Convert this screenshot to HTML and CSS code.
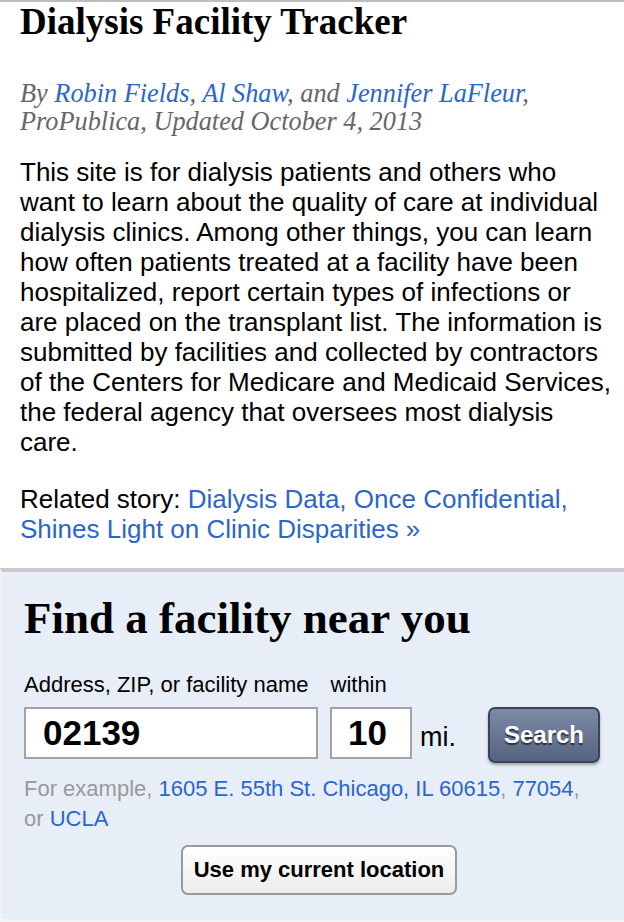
FILE: index.html
```html
<!DOCTYPE html>
<html>
<head>
<meta charset="utf-8">
<link rel="stylesheet" href="styles.css">
</head>
<body>
<div class="page">
  <header class="intro">
    <h1 class="title">Dialysis Facility Tracker</h1>
    <p class="byline">By <a href="#">Robin Fields</a>, <a href="#">Al Shaw</a>, and <a href="#">Jennifer LaFleur</a>,<br>ProPublica, Updated October 4, 2013</p>
    <p class="desc">This site is for dialysis patients and others who<br>want to learn about the quality of care at individual<br>dialysis clinics. Among other things, you can learn<br>how often patients treated at a facility have been<br>hospitalized, report certain types of infections or<br>are placed on the transplant list. The information is<br>submitted by facilities and collected by contractors<br>of the Centers for Medicare and Medicaid Services,<br>the federal agency that oversees most dialysis<br>care.</p>
    <p class="related">Related story: <a href="#">Dialysis Data, Once Confidential,<br>Shines Light on Clinic Disparities »</a></p>
  </header>
  <section class="finder">
    <h2 class="finder-title">Find a facility near you</h2>
    <div class="labels">
      <span class="label-addr">Address, ZIP, or facility name</span>
      <span class="label-within">within</span>
    </div>
    <div class="fields">
      <div class="input addr">02139</div>
      <div class="input dist">10</div>
      <span class="unit">mi.</span>
      <button class="search-btn">Search</button>
    </div>
    <p class="examples">For example, <a href="#">1605 E. 55th St. Chicago, IL 60615</a>, <a href="#">77054</a>,<br>or <a href="#">UCLA</a></p>
    <div class="locate-row">
      <button class="locate-btn">Use my current location</button>
    </div>
  </section>
</div>
</body>
</html>
```
FILE: styles.css
```css
html, body {
  margin: 0;
  padding: 0;
  background: #ffffff;
}
.page {
  width: 624px;
  border-top: 2px solid #bdbdbd;
}
a {
  color: #2a66cc;
  text-decoration: none;
}
.intro {
  padding: 0 4px 0 20px;
}
.title {
  margin: 0;
  font-family: "Liberation Serif", "Times New Roman", serif;
  font-weight: bold;
  font-size: 37px;
  line-height: 40px;
  color: #000;
}
.byline {
  margin: 38px 0 0 0;
  font-family: "Liberation Serif", "Times New Roman", serif;
  font-style: italic;
  font-size: 26.3px;
  line-height: 28px;
  color: #666;
  white-space: nowrap;
}
.desc {
  margin: 21px 0 0 0;
  font-family: "Liberation Sans", Arial, sans-serif;
  font-size: 26px;
  line-height: 30px;
  color: #000;
  white-space: nowrap;
}
.related {
  margin: 27px 0 0 0;
  font-family: "Liberation Sans", Arial, sans-serif;
  font-size: 26px;
  line-height: 30px;
  color: #000;
  white-space: nowrap;
}
.finder {
  margin-top: 24px;
  border-top: 4px solid #c9c9c9;
  border-left: 2px solid #f1f1f1;
  border-bottom: 3px solid #f4f4f4;
  background: #e7eef7;
  padding: 22px 22px 24px 22px;
  font-family: "Liberation Sans", Arial, sans-serif;
}
.finder-title {
  margin: 0;
  font-family: "Liberation Serif", "Times New Roman", serif;
  font-weight: bold;
  font-size: 45px;
  line-height: 48px;
  color: #000;
}
.labels {
  margin-top: 31px;
  display: flex;
  font-size: 22px;
  line-height: 24px;
  color: #000;
}
.label-within {
  margin-left: 22px;
}
.fields {
  margin-top: 10px;
  display: flex;
  align-items: flex-start;
}
.input {
  box-sizing: border-box;
  height: 52px;
  background: #fff;
  border: 2px solid #a3a3a3;
  font-weight: bold;
  font-size: 35px;
  line-height: 48px;
  color: #000;
}
.addr {
  width: 294px;
  padding-left: 17px;
}
.dist {
  width: 82px;
  margin-left: 12px;
  padding-left: 16px;
}
.unit {
  margin-left: 8px;
  font-size: 27px;
  line-height: 52px;
  padding-top: 4px;
  color: #000;
}
.search-btn {
  margin-left: 32px;
  width: 112px;
  height: 56px;
  box-sizing: border-box;
  border: 2px solid #38445e;
  border-radius: 7px;
  background: linear-gradient(#7d8aa6, #56647f);
  box-shadow: 0 2px 3px rgba(0,0,0,0.3);
  color: #fff;
  font-family: "Liberation Sans", Arial, sans-serif;
  font-weight: bold;
  font-size: 24px;
  text-shadow: 0 2px 1px #2a3247;
  padding: 0;
}
.examples {
  margin: 11px 0 0 0;
  font-size: 22px;
  line-height: 30px;
  color: #999;
  white-space: nowrap;
}
.locate-row {
  margin-top: 11px;
  display: flex;
  padding-left: 157px;
}
.locate-btn {
  box-sizing: border-box;
  width: 276px;
  height: 50px;
  border: 2px solid #999;
  border-radius: 7px;
  background: linear-gradient(#ffffff, #ececec);
  font-family: "Liberation Sans", Arial, sans-serif;
  font-weight: bold;
  font-size: 22px;
  color: #000;
  padding: 0;
}
```
